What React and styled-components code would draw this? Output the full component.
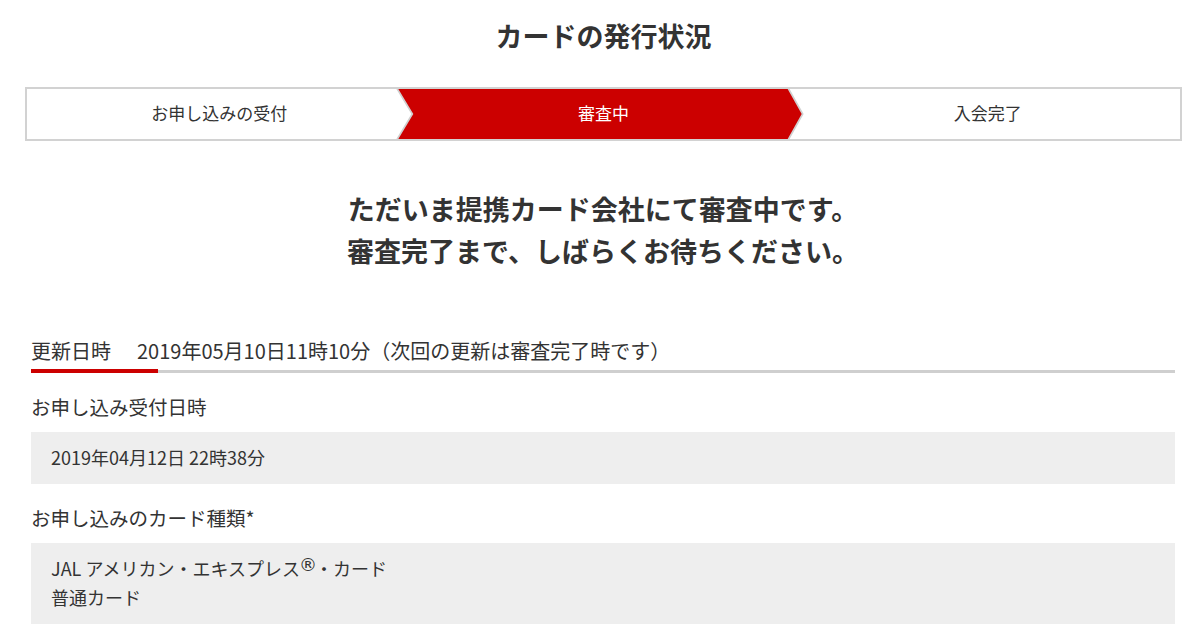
import styled, { createGlobalStyle } from 'styled-components'

const GlobalStyle = createGlobalStyle`
  body {
    margin: 0;
    background: #fff;
    color: #333;
    font-family: "Noto Sans CJK JP", "Noto Sans", sans-serif;
  }
`

const Page = styled.div`
  width: 1157px;
  margin-left: 25px;
`

const Title = styled.h1`
  margin: 18px 0 0;
  font-size: 27px;
  line-height: 36px;
  font-weight: 700;
  text-align: center;
  color: #333;
`

const Stepper = styled.ol`
  display: flex;
  margin: 33px 0 0;
  padding: 0;
  list-style: none;
  height: 50px;
  border: 2px solid #d2d2d2;
  background: #fff;
`

const Step = styled.li`
  position: relative;
  flex: 1;
  display: flex;
  align-items: center;
  justify-content: center;
  padding-bottom: 4px;
  font-size: 17px;
  color: ${p => (p.$active ? '#fff' : '#333')};

  &::before,
  &::after {
    content: '';
    display: ${p => (p.$active ? 'block' : 'none')};
    position: absolute;
    top: 0;
    bottom: 0;
    clip-path: polygon(0 0, calc(100% - 14px) 0, 100% 50%, calc(100% - 14px) 100%, 0 100%, 15px 50%);
  }
  &::before {
    left: -15px;
    right: -8px;
    background: #d0d0d0;
    z-index: 1;
  }
  &::after {
    left: -13px;
    right: -6px;
    background: #cc0000;
    z-index: 2;
  }
`

const StepLabel = styled.span`
  position: relative;
  z-index: 3;
`

const Content = styled.div`
  padding: 0 7px 0 6px;
`

const Message = styled.p`
  margin: 47px 0 0;
  font-size: 27px;
  line-height: 42px;
  font-weight: 700;
  text-align: center;
`

const Tab = styled.div`
  position: relative;
  display: flex;
  gap: 26px;
  margin-top: 65px;
  padding-bottom: 5px;
  font-size: 20px;
  line-height: 28px;
  border-bottom: 3px solid #cfcfcf;

  &::after {
    content: '';
    position: absolute;
    left: 0;
    bottom: -3px;
    width: 127px;
    height: 4px;
    background: #cc0000;
  }
`

const Heading = styled.h2`
  margin: 20px 0 11px;
  font-size: 19.5px;
  line-height: 28px;
  font-weight: 400;
`

const Box = styled.div`
  background: #eeeeee;
  padding: 11px 20px 12px;
  font-size: 18px;
  line-height: 29px;
`

const Reg = styled.span`
  font-family: "DejaVu Sans", sans-serif;
  font-size: 18px;
  vertical-align: 0.3em;
  line-height: 0;
  margin: 0 -2px 0 -1px;
`

const steps = ['お申し込みの受付', '審査中', '入会完了']

export default function App() {
  return (
    <Page>
      <GlobalStyle />
      <Title>カードの発行状況</Title>
      <Stepper>
        {steps.map((s, i) => (
          <Step key={s} $active={i === 1}>
            <StepLabel>{s}</StepLabel>
          </Step>
        ))}
      </Stepper>
      <Content>
        <Message>
          ただいま提携カード会社にて審査中です。
          <br />
          審査完了まで、しばらくお待ちください。
        </Message>
        <Tab>
          <span>更新日時</span>
          <span>2019年05月10日11時10分（次回の更新は審査完了時です）</span>
        </Tab>
        <Heading>お申し込み受付日時</Heading>
        <Box>2019年04月12日 22時38分</Box>
        <Heading>お申し込みのカード種類*</Heading>
        <Box>
          JAL アメリカン・エキスプレス<Reg>®</Reg>・カード
          <br />
          普通カード
        </Box>
      </Content>
    </Page>
  )
}
